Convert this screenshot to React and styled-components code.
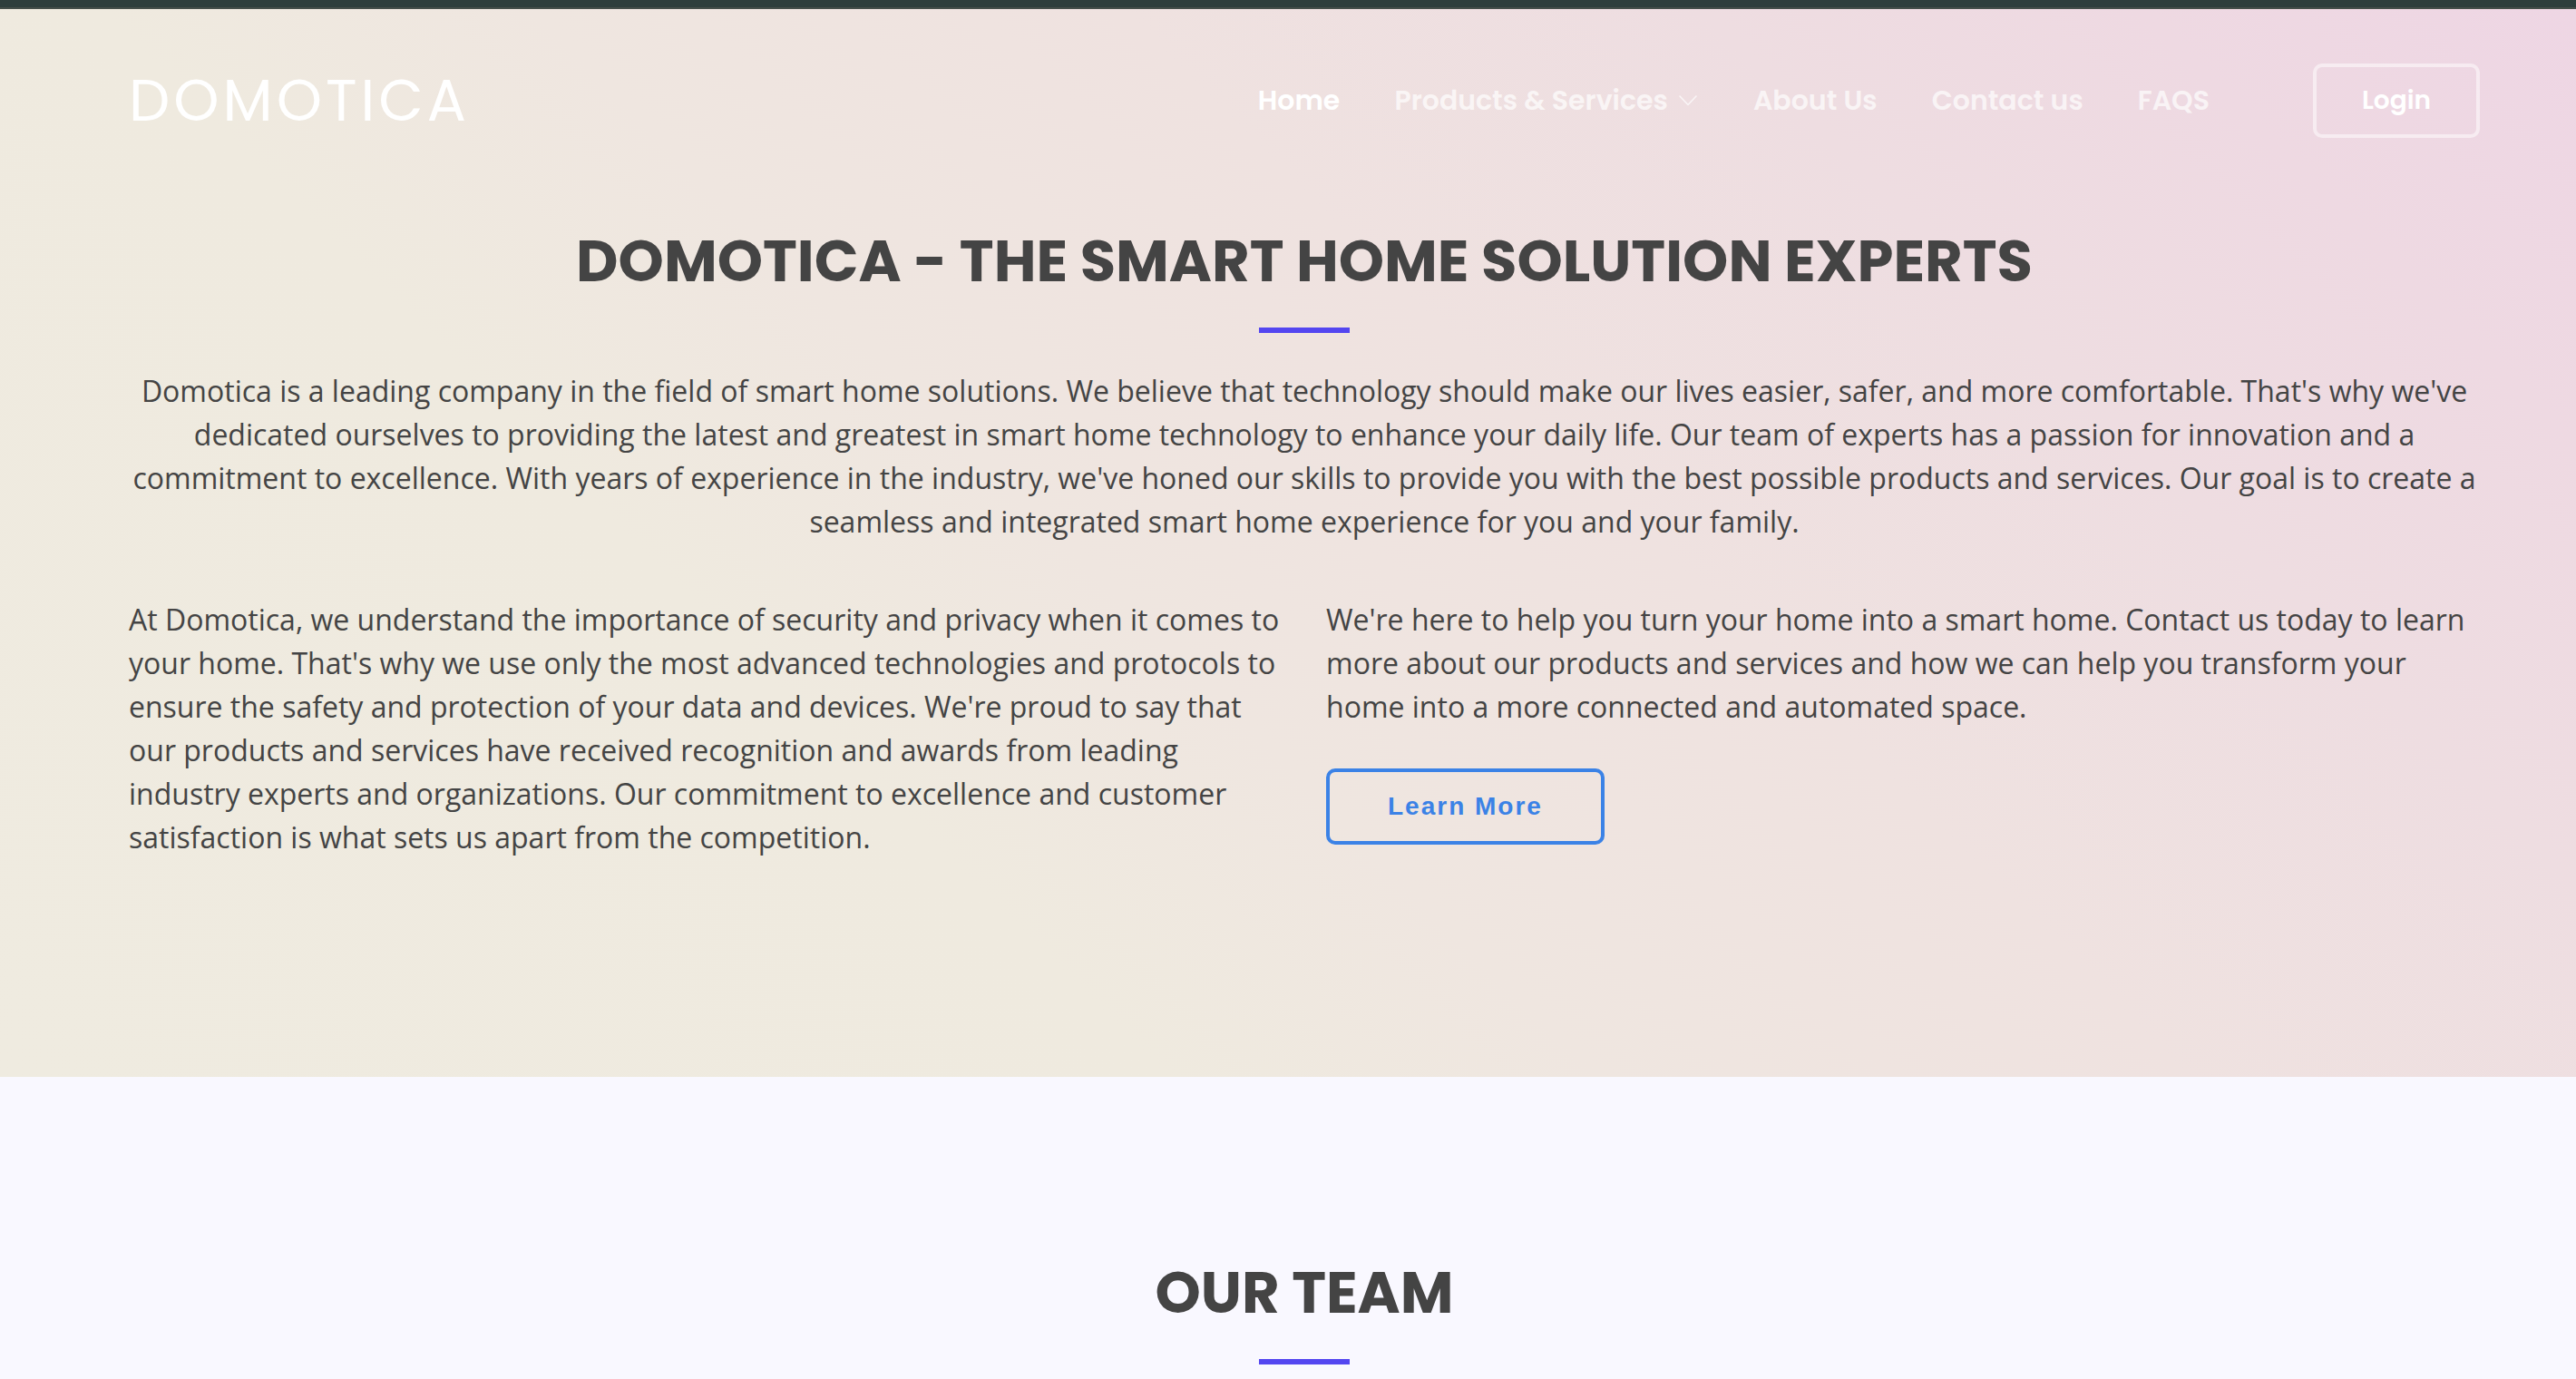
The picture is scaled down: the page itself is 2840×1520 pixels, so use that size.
import React from "react";
import styled, { createGlobalStyle } from "styled-components";

const display = '"Poppins", "Inter", sans-serif';

const GlobalStyle = createGlobalStyle`
  *, *::before, *::after { box-sizing: border-box; }
  body {
    margin: 0;
    background: #f9f8ff;
    color: #444444;
    font-family: "Open Sans", sans-serif;
    font-size: 32px;
    line-height: 48px;
  }
  h1, h2, p, ul { margin: 0; padding: 0; }
`;

const TopStrip = styled.div`
  height: 10px;
  background: #2d3e3c;
  border-bottom: 2px solid #444f4a;
`;

const Hero = styled.div`
  padding-bottom: 240px;
  background: linear-gradient(
    45deg,
    #efebe0 0%,
    #efeadf 32%,
    #efe6e0 44%,
    #efe2e0 60%,
    #eedde1 76%,
    #eed9e2 88%,
    #eed6e4 100%
  );
`;

const Container = styled.div`
  padding: 0 106px 0 5%;
`;

const Header = styled(Container).attrs({ as: "header" })`
  display: flex;
  align-items: center;
  justify-content: space-between;
  padding-top: 60px;
  padding-bottom: 60px;
`;

const Logo = styled.a`
  color: #ffffff;
  font-family: ${display};
  font-size: 64px;
  line-height: 82px;
  letter-spacing: 4px;
  text-decoration: none;
`;

const Nav = styled.nav`
  display: flex;
  align-items: center;
  gap: 114px;
`;

const NavList = styled.ul`
  display: flex;
  gap: 60px;
  list-style: none;
`;

const NavLink = styled.a`
  display: flex;
  align-items: center;
  gap: 12px;
  color: ${(p) => (p.$active ? "#ffffff" : "rgba(255, 255, 255, 0.7)")};
  font-family: ${display};
  font-size: 30px;
  font-weight: 600;
  line-height: 48px;
  text-decoration: none;
  white-space: nowrap;
`;

const LoginButton = styled.button`
  width: 184px;
  height: 82px;
  border: 4px solid rgba(255, 255, 255, 0.5);
  border-radius: 10px;
  background: transparent;
  color: #ffffff;
  font-family: ${display};
  font-size: 28px;
  font-weight: 600;
  cursor: pointer;
`;

const Section = styled(Container).attrs({ as: "section" })`
  padding-top: ${(p) => p.$top}px;
`;

const Title = styled.h2`
  display: flex;
  flex-direction: column;
  align-items: center;
  gap: 32px;
  margin-bottom: 40px;
  font-family: ${display};
  font-size: 64px;
  font-weight: 700;
  line-height: 82px;
  text-align: center;
  text-transform: uppercase;

  &::after {
    content: "";
    width: 100px;
    height: 6px;
    background: #5446f0;
  }
`;

const Intro = styled.p`
  text-align: center;
`;

const Columns = styled.div`
  display: grid;
  grid-template-columns: 1fr 1fr;
  gap: 48px;
  margin-top: 60px;
`;

const Column = styled.div`
  display: flex;
  flex-direction: column;
  align-items: flex-start;
  gap: 44px;
`;

const LearnMore = styled.a`
  padding: 14px 64px;
  border: 4px solid #3b82e6;
  border-radius: 10px;
  color: #3b82e6;
  font-family: "Liberation Sans", Arial, sans-serif;
  font-size: 28px;
  font-weight: 700;
  letter-spacing: 2px;
  text-decoration: none;
`;

function Chevron() {
  return (
    <svg width="22" height="12" viewBox="0 0 22 12" fill="none" aria-hidden="true">
      <path d="M1 1l9 9.5L19 1" stroke="currentColor" strokeWidth="1.6" strokeLinecap="round" strokeLinejoin="round" />
    </svg>
  );
}

const links = [
  { label: "Home", active: true },
  { label: "Products & Services", menu: true },
  { label: "About Us" },
  { label: "Contact us" },
  { label: "FAQS" },
];

export default function App() {
  return (
    <>
      <GlobalStyle />
      <TopStrip />
      <Hero>
        <Header>
          <Logo href="#">DOMOTICA</Logo>
          <Nav>
            <NavList>
              {links.map((l) => (
                <li key={l.label}>
                  <NavLink href="#" $active={l.active}>
                    {l.label}
                    {l.menu && <Chevron />}
                  </NavLink>
                </li>
              ))}
            </NavList>
            <LoginButton type="button">Login</LoginButton>
          </Nav>
        </Header>
        <Section $top={35}>
          <Title as="h1">Domotica - The Smart Home Solution Experts</Title>
          <Intro>
            Domotica is a leading company in the field of smart home solutions. We believe that technology should make
            our lives easier, safer, and more comfortable. That's why we've dedicated ourselves to providing the latest
            and greatest in smart home technology to enhance your daily life. Our team of experts has a passion for
            innovation and a commitment to excellence. With years of experience in the industry, we've honed our skills
            to provide you with the best possible products and services. Our goal is to create a seamless and
            integrated smart home experience for you and your family.
          </Intro>
          <Columns>
            <Column>
              <p>
                At Domotica, we understand the importance of security and privacy when it comes to your home. That's
                why we use only the most advanced technologies and protocols to ensure the safety and protection of
                your data and devices. We're proud to say that our products and services have received recognition and
                awards from leading industry experts and organizations. Our commitment to excellence and customer
                satisfaction is what sets us apart from the competition.
              </p>
            </Column>
            <Column>
              <p>
                We're here to help you turn your home into a smart home. Contact us today to learn more about our
                products and services and how we can help you transform your home into a more connected and automated
                space.
              </p>
              <LearnMore href="#">Learn More</LearnMore>
            </Column>
          </Columns>
        </Section>
      </Hero>
      <Section $top={197}>
        <Title>Our Team</Title>
      </Section>
    </>
  );
}
